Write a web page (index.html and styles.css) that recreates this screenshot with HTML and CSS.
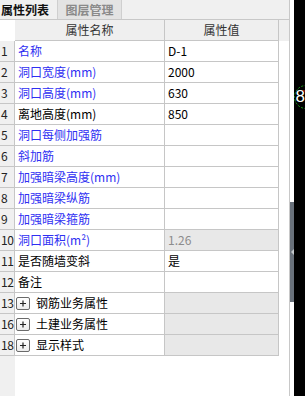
FILE: index.html
```html
<!DOCTYPE html>
<html lang="zh-CN">
<head>
  <meta charset="UTF-8" />
  <meta name="viewport" content="width=device-width, initial-scale=1.0"/>
  <title>属性列表</title>
  <link rel="stylesheet" href="styles.css">
</head>
<body>
  <div class="panel">
    <div class="tabs">
      <div class="tab active">属性列表</div>
      <div class="tab">图层管理</div>
    </div>

    <div class="grid">
      <div class="row head">
        <div class="num corner"></div>
        <div class="cell">属性名称</div>
        <div class="cell">属性值</div>
      </div>

      <div class="row"><div class="num">1</div><div class="cell name blue">名称</div><div class="cell val">D-1</div></div>
      <div class="row"><div class="num">2</div><div class="cell name blue">洞口宽度(mm)</div><div class="cell val">2000</div></div>
      <div class="row"><div class="num">3</div><div class="cell name blue">洞口高度(mm)</div><div class="cell val">630</div></div>
      <div class="row"><div class="num">4</div><div class="cell name">离地高度(mm)</div><div class="cell val">850</div></div>
      <div class="row"><div class="num">5</div><div class="cell name blue">洞口每侧加强筋</div><div class="cell val"></div></div>
      <div class="row"><div class="num">6</div><div class="cell name blue">斜加筋</div><div class="cell val"></div></div>
      <div class="row"><div class="num">7</div><div class="cell name blue">加强暗梁高度(mm)</div><div class="cell val"></div></div>
      <div class="row"><div class="num">8</div><div class="cell name blue">加强暗梁纵筋</div><div class="cell val"></div></div>
      <div class="row"><div class="num">9</div><div class="cell name blue">加强暗梁箍筋</div><div class="cell val"></div></div>
      <div class="row"><div class="num">10</div><div class="cell name blue">洞口面积(m²)</div><div class="cell val readonly">1.26</div></div>
      <div class="row"><div class="num">11</div><div class="cell name">是否随墙变斜</div><div class="cell val">是</div></div>
      <div class="row"><div class="num">12</div><div class="cell name">备注</div><div class="cell val"></div></div>
      <div class="row">
        <div class="num">13</div>
        <div class="cell name group"><span class="expand"><svg width="14" height="13" viewBox="0 0 14 13"><path d="M4 6.5h6M7 3.5v6" stroke="#222" stroke-width="1.2"/></svg></span>钢筋业务属性</div>
        <div class="cell val readonly"></div>
      </div>
      <div class="row">
        <div class="num">16</div>
        <div class="cell name group"><span class="expand"><svg width="14" height="13" viewBox="0 0 14 13"><path d="M4 6.5h6M7 3.5v6" stroke="#222" stroke-width="1.2"/></svg></span>土建业务属性</div>
        <div class="cell val readonly"></div>
      </div>
      <div class="row">
        <div class="num">18</div>
        <div class="cell name group"><span class="expand"><svg width="14" height="13" viewBox="0 0 14 13"><path d="M4 6.5h6M7 3.5v6" stroke="#222" stroke-width="1.2"/></svg></span>显示样式</div>
        <div class="cell val readonly"></div>
      </div>

      <div class="filler"><div class="num-strip"></div></div>
    </div>
  </div>

  <div class="splitter">
    <div class="handle"><span class="arrow"></span></div>
  </div>

  <div class="canvas">
    <svg class="mark" width="11" height="30" viewBox="0 0 11 30">
      <circle cx="12" cy="14" r="11.5" fill="none" stroke="#1a9a1a" stroke-width="1" stroke-dasharray="2 1.5"/>
      <text x="1.5" y="19" fill="#fff" font-family="Liberation Sans, sans-serif" font-size="17">8</text>
      <path d="M9 8h2" stroke="#e02020" stroke-width="1"/>
    </svg>
  </div>
</body>
</html>
```

FILE: styles.css
```css
html, body {
  margin: 0;
  height: 396px;
  overflow: hidden;
}
body {
  display: flex;
  font-family: "Noto Sans CJK SC", "Noto Sans", sans-serif;
  font-size: 12px;
  color: #000;
  background: #fff;
}

.panel {
  width: 289px;
  border-right: 1px solid #c8c8c8;
  display: flex;
  flex-direction: column;
  background: #fff;
}

/* tabs */
.tabs {
  display: flex;
  height: 19px;
  background: #f0f0f0;
  border-bottom: 1px solid #c8c8c8;
}
.tab {
  width: 65px;
  line-height: 19px;
  text-align: center;
  font-weight: bold;
  color: #8a8a8a;
  background: #e3e3e3;
  border-left: 1px solid #cfcfcf;
  border-right: 1px solid #cfcfcf;
  box-sizing: border-box;
}
.tab.active {
  width: 57px;
  text-align: left;
  padding-left: 1px;
  color: #111;
  background: #f0f0f0;
  border: none;
}

/* grid */
.grid {
  flex: 1;
  display: flex;
  flex-direction: column;
}
.row {
  display: grid;
  grid-template-columns: 15px 150px 114px;
  height: 21px;
}
.row > div {
  box-sizing: border-box;
  border-right: 1px solid #c6c6c6;
  border-bottom: 1px solid #c6c6c6;
  line-height: 20px;
  white-space: nowrap;
  overflow: hidden;
}
.row.head {
  background: #efefef;
  color: #333;
}
.row.head .cell {
  text-align: center;
}
.row.head .corner {
  background: #fff;
  border-right: none;
  border-bottom: none;
}
.num {
  background: #f0f0f0;
  color: #222;
  padding-left: 1px;
  font-size: 12px;
  letter-spacing: -0.3px;
}
.cell.name {
  padding-left: 3px;
}
.cell.val {
  padding-left: 3px;
}
.blue {
  color: #2f2ff2;
}
.readonly {
  background: #e8e8e8;
  color: #8c8c8c;
}

.group {
  display: flex;
  align-items: center;
}
.cell.name.group {
  padding-left: 1px;
}
.expand {
  display: inline-flex;
  width: 14px;
  height: 13px;
  box-sizing: border-box;
  border: 1px solid #6a6a6a;
  border-radius: 2px;
  background: linear-gradient(#ffffff, #ececec);
  margin-right: 6px;
  align-items: center;
  justify-content: center;
}
.expand svg {
  display: block;
  margin: -1px;
}

.filler {
  flex: 1;
  display: flex;
}
.num-strip {
  width: 15px;
  background: #f0f0f0;
}

/* splitter between panel and drawing */
.splitter {
  width: 4px;
  padding-top: 202px;
  background: #fff;
}
.handle {
  height: 100px;
  background: #69717b;
  display: flex;
  align-items: center;
  justify-content: center;
}
.arrow {
  width: 0;
  height: 0;
  border-top: 3px solid transparent;
  border-bottom: 3px solid transparent;
  border-right: 3px solid #c4c8cc;
}

/* drawing area */
.canvas {
  flex: 1;
  background: #000;
  position: relative;
}
.mark {
  position: absolute;
  left: 0;
  top: 83px;
}
```
